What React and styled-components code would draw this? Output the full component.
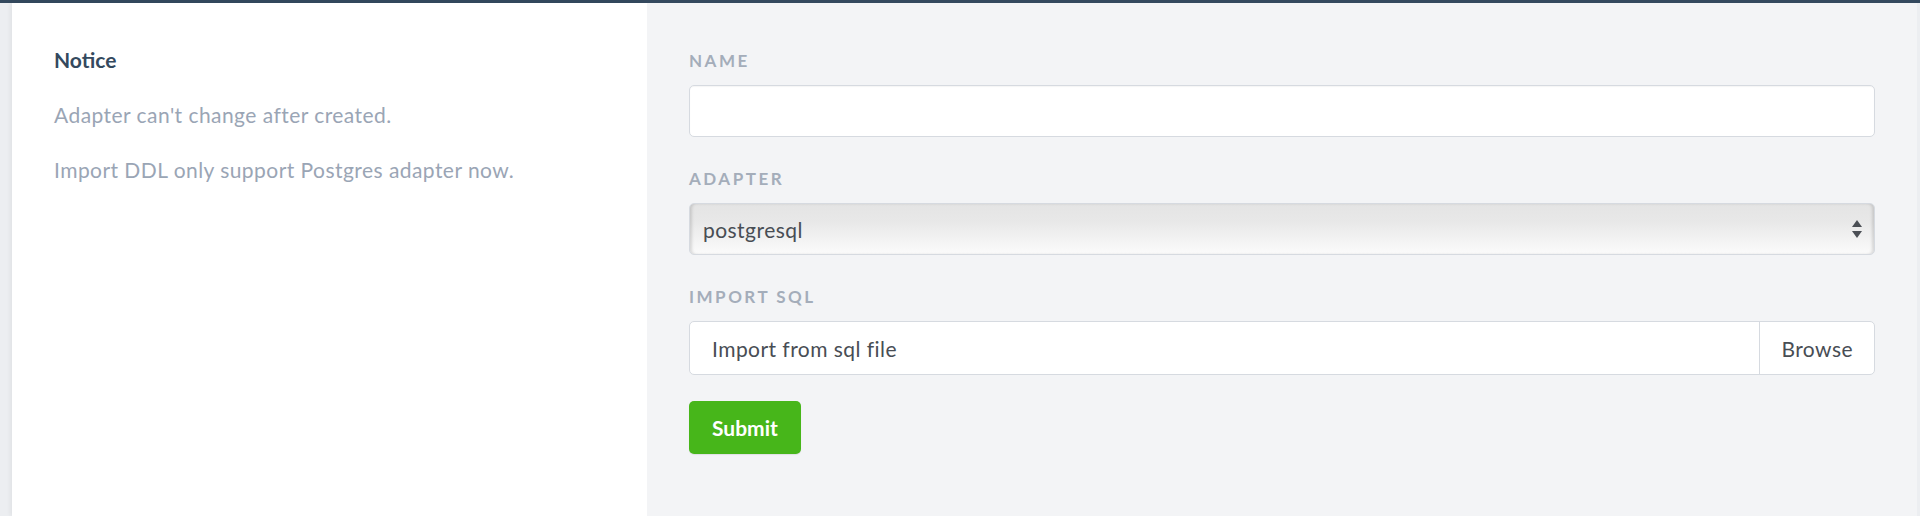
import React from "react"
import styled, { createGlobalStyle } from "styled-components"

const GlobalStyle = createGlobalStyle`
  html, body {
    margin: 0;
    padding: 0;
    height: 100%;
  }
  body {
    background: #eceef1;
    font-family: Lato, "Open Sans", sans-serif;
  }
  #root {
    height: 100%;
  }
`

const App = () => {
  return (
    <Page>
      <GlobalStyle />
      <TopBar />
      <Main>
        <Sidebar>
          <NoticeTitle>Notice</NoticeTitle>
          <NoticeText>Adapter can't change after created.</NoticeText>
          <NoticeText>Import DDL only support Postgres adapter now.</NoticeText>
        </Sidebar>
        <FormArea>
          <Field>
            <Label>Name</Label>
            <TextInput type="text" />
          </Field>
          <Field>
            <Label>Adapter</Label>
            <SelectBox>
              <span>postgresql</span>
              <svg width="10" height="18" viewBox="0 0 10 18">
                <path d="M5 0 L10 7 L0 7 Z" fill="#4b4f55" />
                <path d="M0 11 L10 11 L5 18 Z" fill="#4b4f55" />
              </svg>
            </SelectBox>
          </Field>
          <Field>
            <Label>Import SQL</Label>
            <FileBox>
              <FileText>Import from sql file</FileText>
              <Browse>Browse</Browse>
            </FileBox>
          </Field>
          <SubmitButton>Submit</SubmitButton>
        </FormArea>
      </Main>
    </Page>
  )
}
export default App

const Page = styled.div`
display: flex;
flex-direction: column;
height: 100vh;
`
const TopBar = styled.div`
height: 3px;
background: #34495e;
flex-shrink: 0;
`
const Main = styled.div`
flex: 1;
display: flex;
padding: 0 3px 0 12px;
`
const Sidebar = styled.div`
width: 635px;
box-sizing: border-box;
background: #fff;
padding: 44px 42px;
display: flex;
flex-direction: column;
gap: 29px;
box-shadow: -2px 0 4px rgba(0, 0, 0, 0.05);
`
const NoticeTitle = styled.div`
font-size: 21px;
line-height: 26px;
font-weight: 700;
color: #34495e;
`
const NoticeText = styled.div`
font-size: 21px;
line-height: 26px;
letter-spacing: 0.45px;
color: #9aa5b5;
`
const FormArea = styled.div`
flex: 1;
background: #f3f4f6;
padding: 48px 42px;
display: flex;
flex-direction: column;
align-items: flex-start;
`
const Field = styled.div`
align-self: stretch;
display: flex;
flex-direction: column;
gap: 14px;
margin-bottom: 32px;
&:last-of-type {
  margin-bottom: 26px;
}
`
const Label = styled.div`
font-size: 17px;
line-height: 20px;
font-weight: 700;
letter-spacing: 2.5px;
text-transform: uppercase;
color: #a4adba;
`
const TextInput = styled.input`
height: 52px;
box-sizing: border-box;
border: 1px solid #d6dae0;
border-radius: 5px;
background: #fff;
box-shadow: inset 0 1px 1px rgba(0, 0, 0, 0.04);
outline: none;
`
const SelectBox = styled.div`
height: 52px;
box-sizing: border-box;
display: flex;
align-items: center;
justify-content: space-between;
padding: 0 12px 0 13px;
border: 1px solid #d6dae0;
border-radius: 5px;
background: linear-gradient(to bottom, #e4e4e4 0%, #e8e8e8 35%, #fbfbfb 100%);
box-shadow: inset 3px 0 3px -1px rgba(0, 0, 0, 0.13), inset -3px 0 3px -1px rgba(0, 0, 0, 0.13);
font-size: 21px;
letter-spacing: 0.45px;
color: #484d54;
`
const FileBox = styled.div`
height: 54px;
box-sizing: border-box;
display: flex;
border: 1px solid #d6dae0;
border-radius: 5px;
background: #fff;
overflow: hidden;
`
const FileText = styled.div`
flex: 1;
display: flex;
align-items: center;
padding-left: 22px;
font-size: 21px;
letter-spacing: 0.45px;
color: #484d54;
`
const Browse = styled.div`
display: flex;
align-items: center;
padding: 0 21px;
border-left: 1px solid #d6dae0;
font-size: 21px;
letter-spacing: 0.45px;
color: #484d54;
`
const SubmitButton = styled.button`
height: 53px;
padding: 0 23px;
border: none;
border-radius: 5px;
background: #47b61a;
color: #fff;
font-family: Lato, "Open Sans", sans-serif;
font-size: 21px;
font-weight: 700;
box-shadow: 0 1px 1px rgba(0, 0, 0, 0.08);
`
